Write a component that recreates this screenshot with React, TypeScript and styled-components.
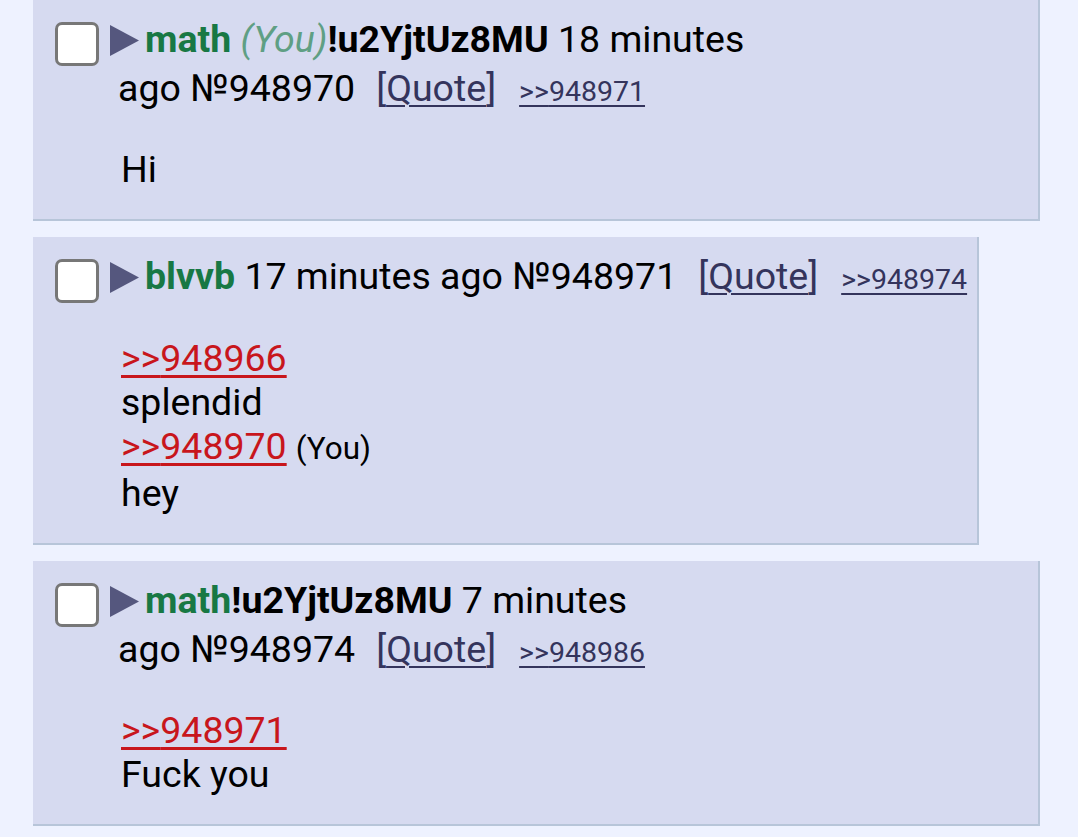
import styled, { createGlobalStyle } from "styled-components";

const GlobalStyle = createGlobalStyle`
  html, body {
    margin: 0;
    padding: 0;
    background: #eef2ff;
  }
  body {
    font-family: Roboto, "Liberation Sans", sans-serif;
    color: #000;
  }
`;

type Piece =
  | { kind: "text"; value: string }
  | { kind: "quote"; value: string; you?: boolean };

type PostData = {
  id: number;
  name: string;
  you?: boolean;
  trip?: string;
  timeHead: string;
  backlink: string;
  body: Piece[][];
};

const posts: PostData[] = [
  {
    id: 948970,
    name: "math",
    you: true,
    trip: "!u2YjtUz8MU",
    timeHead: "18 minutes",
    backlink: "948971",
    body: [[{ kind: "text", value: "Hi" }]],
  },
  {
    id: 948971,
    name: "blvvb",
    timeHead: "17 minutes",
    backlink: "948974",
    body: [
      [{ kind: "quote", value: "948966" }],
      [{ kind: "text", value: "splendid" }],
      [{ kind: "quote", value: "948970", you: true }],
      [{ kind: "text", value: "hey" }],
    ],
  },
  {
    id: 948974,
    name: "math",
    trip: "!u2YjtUz8MU",
    timeHead: "7 minutes",
    backlink: "948986",
    body: [
      [{ kind: "quote", value: "948971" }],
      [{ kind: "text", value: "Fuck you" }],
    ],
  },
];

const Thread = styled.div`
  display: flex;
  flex-direction: column;
  align-items: flex-start;
  gap: 16px;
  padding: 0 0 0 33px;
`;

const Reply = styled.div`
  box-sizing: border-box;
  max-width: 1007px;
  background: #d6daf0;
  border-right: 2px solid #b7c5d9;
  border-bottom: 2px solid #b7c5d9;
  padding: 17px 10px 28px 85px;
  font-size: 37.5px;
  line-height: 44px;
`;

const Header = styled.div`
  text-indent: -63px;
`;

const Check = styled.span`
  display: inline-block;
  box-sizing: border-box;
  width: 44px;
  height: 44px;
  border: 3px solid #777;
  border-radius: 7px;
  background: #fff;
  vertical-align: -14px;
  margin-right: 11px;
`;

const Arrow = styled.svg`
  display: inline-block;
  width: 29px;
  height: 31px;
  vertical-align: -4px;
  margin-right: 6px;
`;

const Name = styled.span`
  color: #187844;
  font-weight: 700;
`;

const You = styled.span`
  color: #5f9f84;
  font-style: italic;
`;

const Trip = styled.span`
  font-weight: 700;
`;

const NoWrap = styled.span`
  white-space: nowrap;
`;

const QuoteBtn = styled.span`
  color: #34345c;
  margin-left: 21px;
  u {
    text-decoration-thickness: 2px;
    text-underline-offset: 4px;
  }
`;

const Backlink = styled.a`
  color: #34345c;
  font-size: 28.5px;
  margin-left: 23px;
  text-decoration: underline;
  text-decoration-thickness: 2px;
  text-underline-offset: 4px;
`;

const Body = styled.div`
  margin: 33px 0 0 3px;
`;

const QuoteLink = styled.a`
  color: #c8161c;
  font-size: 37.5px;
  text-decoration: underline;
  text-decoration-thickness: 3px;
  text-underline-offset: 4px;
`;

const YouMark = styled.span`
  font-size: 31.5px;
  margin-left: 9px;
`;

function Post({ p }: { p: PostData }) {
  return (
    <Reply>
      <Header>
        <Check />
        <Arrow viewBox="0 0 29 31" width={29} height={31}>
          <path d="M0 0 L29 15.5 L0 31 Z" fill="#55577e" />
        </Arrow>
        <Name>{p.name}</Name>
        {p.you && <You> (You)</You>}
        {p.trip && <Trip>{p.trip}</Trip>} {p.timeHead}{" "}
        <NoWrap>
          ago №{p.id}
          <QuoteBtn>
            [<u>Quote</u>]
          </QuoteBtn>
          <Backlink>&gt;&gt;{p.backlink}</Backlink>
        </NoWrap>
      </Header>
      <Body>
        {p.body.map((line, i) => (
          <div key={i}>
            {line.map((piece, j) =>
              piece.kind === "quote" ? (
                <span key={j}>
                  <QuoteLink>&gt;&gt;{piece.value}</QuoteLink>
                  {piece.you && <YouMark>(You)</YouMark>}
                </span>
              ) : (
                <span key={j}>{piece.value}</span>
              )
            )}
          </div>
        ))}
      </Body>
    </Reply>
  );
}

export default function App() {
  return (
    <>
      <GlobalStyle />
      <Thread>
        {posts.map((p) => (
          <Post key={p.id} p={p} />
        ))}
      </Thread>
    </>
  );
}
